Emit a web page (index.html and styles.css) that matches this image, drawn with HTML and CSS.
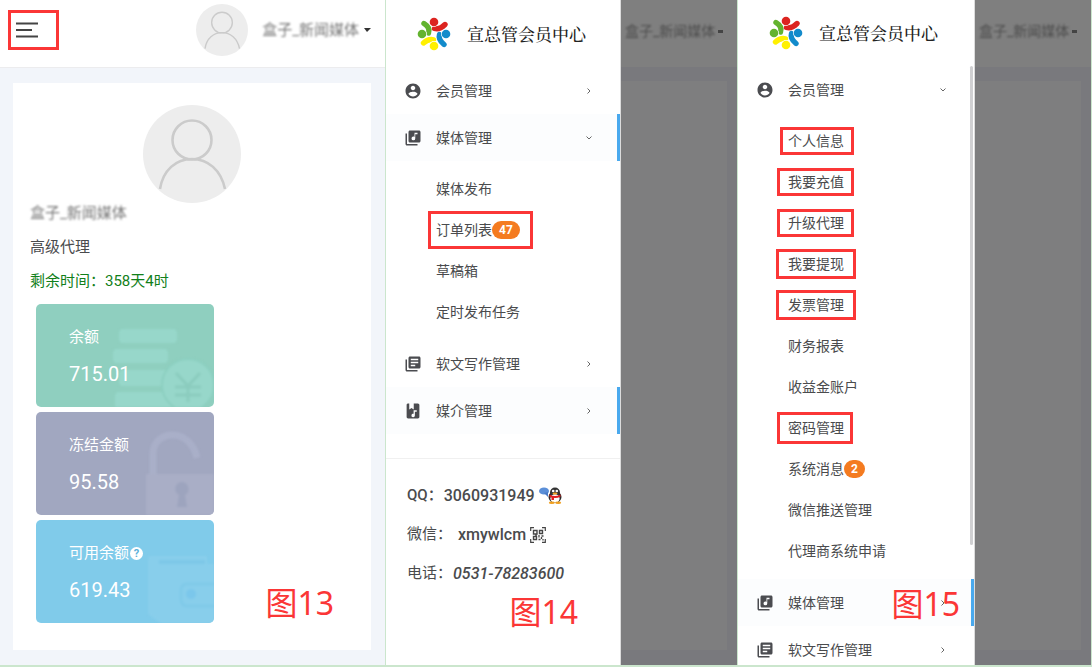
FILE: index.html
```html
<!DOCTYPE html>
<html lang="zh-CN">
<head>
<meta charset="utf-8">
<title>宣总管会员中心</title>
<link rel="stylesheet" href="styles.css">
</head>
<body>
<svg class="defs" aria-hidden="true">
  <symbol id="avatar" viewBox="0 0 98 98">
    <circle cx="49" cy="49" r="49" fill="#ededed"/>
    <g fill="none" stroke="#cbcbcb" stroke-width="2.6"><circle cx="49" cy="35" r="19.5"/><path d="M17 84C20 65 33 54 49 54S78 65 82 84"/></g>
  </symbol>
  <symbol id="logo" viewBox="0 0 34 34">
    <g fill="none" stroke-width="5.4" stroke-linecap="round">
      <path d="M17.500 11.500Q22.500 13 28 7.500" stroke="#dc2420"/>
      <path d="M22.500 17.500Q21 22.500 27 27.500" stroke="#138bcb"/>
      <path d="M16.500 22.800Q11.500 21.500 6.500 26" stroke="#fff000"/>
      <path d="M11.500 16Q13.500 10.500 7 6.500" stroke="#63b32f"/>
    </g>
    <circle cx="17" cy="5" r="5" fill="#fff"/><circle cx="29" cy="17" r="5" fill="#fff"/><circle cx="17" cy="29" r="5" fill="#fff"/><circle cx="5" cy="17" r="5" fill="#fff"/>
    <circle cx="17" cy="5" r="4.300" fill="#dc2420"/><circle cx="29" cy="17" r="4.300" fill="#138bcb"/><circle cx="17" cy="29" r="4.300" fill="#fff000"/><circle cx="5" cy="17" r="4.300" fill="#63b32f"/>
  </symbol>
  <symbol id="account" viewBox="0 0 24 24"><path d="M12 2C6.480 2 2 6.480 2 12s4.480 10 10 10 10-4.480 10-10S17.520 2 12 2zm0 3c1.660 0 3 1.340 3 3s-1.340 3-3 3-3-1.340-3-3 1.340-3 3-3zm0 14.200c-2.500 0-4.710-1.280-6-3.220.030-1.990 4-3.080 6-3.080 1.990 0 5.970 1.090 6 3.080-1.290 1.940-3.500 3.220-6 3.220z"/></symbol>
  <symbol id="music" viewBox="0 0 24 24"><path d="M20 2H8c-1.100 0-2 .9-2 2v12c0 1.100.9 2 2 2h12c1.100 0 2-.9 2-2V4c0-1.100-.9-2-2-2zm-2 5h-3v5.500a2.500 2.500 0 1 1-2.500-2.500c.57 0 1.080.19 1.500.51V5h4v2zM4 6H2v14c0 1.100.9 2 2 2h14v-2H4V6z"/></symbol>
  <symbol id="books" viewBox="0 0 24 24"><path d="M4 6H2v14c0 1.100.9 2 2 2h14v-2H4V6zm16-4H8c-1.100 0-2 .9-2 2v12c0 1.100.9 2 2 2h12c1.100 0 2-.9 2-2V4c0-1.100-.9-2-2-2zm-1 9H9V9h10v2zm-4 4H9v-2h6v2zm4-8H9V5h10v2z"/></symbol>
  <symbol id="album" viewBox="0 0 24 24"><path d="M5 2C4 2 3.500 3 3.500 4v16c0 1 .8 2 2 2h13c1.200 0 2-1 2-2V4c0-1-.8-2-2-2H13v8l-3-2-3 2V2zm12 9v2h-2.500v5a2.300 2.300 0 1 1-1.700-2.200V11z"/></symbol>
  <symbol id="chevron" viewBox="0 0 8 8"><path d="M2.500 1.500 5 4 2.500 6.500" fill="none" stroke="#666" stroke-width="1"/></symbol>
</svg>
<main class="board">
  <section class="panel">
    <header class="topbar">
      <button class="menu-button" type="button" aria-label="菜单">
        <svg width="22" height="16" viewBox="0 0 22 16"><path d="M0 1.500h22M0 8h16M0 14.500h22" stroke="#444" stroke-width="1.800"/></svg>
      </button>
      <button class="user" type="button">
        <svg class="user-pic"><use href="#avatar"/></svg>
        <span class="masked">盒子_新闻媒体</span>
        <svg class="caret" width="7" height="6" viewBox="0 0 7 6"><path d="M0 1h7L3 5z" fill="#333"/></svg>
      </button>
    </header>
    <div class="content">
      <article class="card">
        <svg class="card-pic"><use href="#avatar"/></svg>
        <p class="line masked">盒子_新闻媒体</p>
        <p class="line">高级代理</p>
        <p class="line remain">剩余时间：358天4时</p>
        <div class="tiles">
          <div class="tile green">
            <svg class="art" viewBox="0 0 105 103"><g fill="#97d7ca"><rect x="10" y="25" width="58" height="14" rx="4"/><rect x="4" y="45" width="55" height="14" rx="4"/><rect x="10" y="66" width="48" height="16" rx="4"/><rect x="6" y="88" width="58" height="18" rx="4"/><circle cx="79" cy="81" r="26" stroke="#8ccfc0" stroke-width="2"/></g><path d="M67 69l12 13 12-13M66 83h26M66 91h26M79 82v16" fill="none" stroke="#8bccbe" stroke-width="3"/></svg>
            <span class="label">余额</span><span class="value">715.01</span>
          </div>
          <div class="tile violet">
            <svg class="art" viewBox="0 0 105 103"><path d="M44 64V42c0-25 38-27 44 4" fill="none" stroke="#a9afc8" stroke-width="7"/><path d="M37 62h68v41H37z" fill="#a9aec6"/><path d="M72 70a7 7 0 0 1 4 13l2 12H68l2-12a7 7 0 0 1 2-13z" fill="#9da4be"/></svg>
            <span class="label">冻结金额</span><span class="value">95.58</span>
          </div>
          <div class="tile blue">
            <svg class="art" viewBox="0 0 105 103"><path d="M40 36h58v8h7v59H51l-12-9V39z" fill="#88ceeb"/><path d="M50 42h46" stroke="#7dc8e8" stroke-width="4"/><path d="M105 64H78q-6 0-6 7v7q0 8 6 8h27" fill="none" stroke="#80cae9" stroke-width="3"/><circle cx="82" cy="74" r="5" fill="#7bc7eb"/></svg>
            <span class="label">可用余额<span class="help">?</span></span><span class="value">619.43</span>
          </div>
        </div>
      </article>
    </div>
    <p class="caption c13">图13</p>
  </section>

  <section class="panel split second">
    <div class="drawer">
      <div class="brand"><svg><use href="#logo"/></svg><span>宣总管会员中心</span></div>
      <nav>
        <button class="row" type="button"><svg class="ic"><use href="#account"/></svg><span>会员管理</span><svg class="chev"><use href="#chevron"/></svg></button>
        <button class="row active" type="button"><svg class="ic"><use href="#music"/></svg><span>媒体管理</span><svg class="chev open"><use href="#chevron"/></svg></button>
        <ul class="sub">
          <li><a href="#">媒体发布</a></li>
          <li><a class="mark wide" href="#">订单列表<span class="badge">47</span></a></li>
          <li><a href="#">草稿箱</a></li>
          <li><a href="#">定时发布任务</a></li>
        </ul>
        <button class="row" type="button"><svg class="ic"><use href="#books"/></svg><span>软文写作管理</span><svg class="chev"><use href="#chevron"/></svg></button>
        <button class="row active" type="button"><svg class="ic"><use href="#album"/></svg><span>媒介管理</span><svg class="chev"><use href="#chevron"/></svg></button>
      </nav>
      <div class="contact">
        <p><b>QQ：</b><b class="num">3060931949</b>
          <svg class="qq" width="24" height="17" viewBox="0 0 24 17"><ellipse cx="5" cy="4" rx="5" ry="3.600" fill="#5b8fd8"/><path d="M5 6l4 4 0-5z" fill="#4a7cc8"/><ellipse cx="16" cy="10" rx="6.500" ry="6" fill="#2a2a2a"/><ellipse cx="16" cy="5.500" rx="5" ry="5" fill="#333"/><ellipse cx="16" cy="11.500" rx="4.600" ry="4.300" fill="#fff"/><path d="M10.500 7.500q5.500 3 11 0v2.300q-5.500 2.500-11 0z" fill="#e02020"/><path d="M12.500 9.500h2.500v3.500h-2.500z" fill="#e02020"/><circle cx="14.200" cy="4" r="1.300" fill="#fff"/><circle cx="17.800" cy="4" r="1.300" fill="#fff"/><ellipse cx="16" cy="6.500" rx="2.500" ry="1" fill="#f5a623"/><ellipse cx="12.800" cy="15.800" rx="3" ry="1.200" fill="#f0a020"/><ellipse cx="19.200" cy="15.800" rx="3" ry="1.200" fill="#f0a020"/></svg></p>
        <p>微信： <b class="num wx">xmywlcm</b>
          <svg class="qr" width="16" height="16" viewBox="0 0 16 16" fill="none" stroke="#444"><path d="M.7 4V.7H4M12 .7h3.300V4M15.300 12v3.300H12M4 15.300H.7V12" stroke-width="1.200"/><path d="M3.500 3.500h3.500v3.500h-3.500zM9.500 3.500h3v3h-3zM3.500 9.500h3v3h-3z" stroke-width="1.400"/><path d="M9 8v2.500M8.500 12.500h2M11.500 9h2M11.500 10v2M13 12v1.500M5 8h2" stroke-width="1.300"/></svg></p>
        <p>电话：<b class="num"><i>0531-78283600</i></b></p>
      </div>
      <p class="caption c14">图14</p>
    </div>
    <div class="shade"><div class="shade-top"><span class="masked">盒子_新闻媒体</span><span class="dot"></span></div><div class="shade-body"><div></div></div></div>
  </section>

  <section class="panel split third">
    <div class="drawer">
      <div class="brand"><svg><use href="#logo"/></svg><span>宣总管会员中心</span></div>
      <nav>
        <button class="row" type="button"><svg class="ic"><use href="#account"/></svg><span>会员管理</span><svg class="chev open"><use href="#chevron"/></svg></button>
        <ul class="sub">
          <li><a class="mark near" href="#">个人信息</a></li>
          <li><a class="mark" href="#">我要充值</a></li>
          <li><a class="mark" href="#">升级代理</a></li>
          <li><a class="mark large" href="#">我要提现</a></li>
          <li><a class="mark large" href="#">发票管理</a></li>
          <li><a href="#">财务报表</a></li>
          <li><a href="#">收益金账户</a></li>
          <li><a class="mark tall" href="#">密码管理</a></li>
          <li><a href="#">系统消息<span class="badge">2</span></a></li>
          <li><a href="#">微信推送管理</a></li>
          <li><a href="#">代理商系统申请</a></li>
        </ul>
        <button class="row active" type="button"><svg class="ic"><use href="#music"/></svg><span>媒体管理</span><svg class="chev"><use href="#chevron"/></svg></button>
        <button class="row" type="button"><svg class="ic"><use href="#books"/></svg><span>软文写作管理</span><svg class="chev"><use href="#chevron"/></svg></button>
      </nav>
      <span class="thumb"></span>
      <p class="caption c15">图15</p>
    </div>
    <div class="shade"><div class="shade-top"><span class="masked">盒子_新闻媒体</span><span class="dot"></span></div><div class="shade-body"><div></div></div></div>
  </section>
</main>
</body>
</html>
```

FILE: styles.css
```css
* { box-sizing: border-box; }
body { margin: 0; font: 14px/20px Roboto, "Noto Sans CJK SC", sans-serif; color: #4a4b4d; background: #fff; }
p, ul { margin: 0; padding: 0; }
ul { list-style: none; }
button { font: inherit; color: inherit; background: none; border: 0; padding: 0; text-align: left; }
a { color: inherit; text-decoration: none; }
.defs { position: absolute; width: 0; height: 0; }

.board { display: grid; grid-template-columns: 386fr 352fr 354fr; height: 100vh; border-bottom: 2px solid #cbe6cd; }
.panel { position: relative; min-width: 0; overflow: hidden; border-right: 1px solid #cbe6cd; display: flex; flex-direction: column; }
.masked { color: #777; font-size: 15px; filter: blur(1px); white-space: nowrap; }

/* Account page */
.topbar { display: flex; justify-content: space-between; align-items: center; height: 68px; padding: 0 14px 7px 8px; border-bottom: 1px solid #ececee; flex: none; }
.menu-button { border: 3px solid #fb3636; width: 51px; height: 40px; padding-left: 5px; display: flex; align-items: center; }
.user { display: flex; align-items: center; }
.user-pic { width: 52px; height: 52px; margin-right: 14px; }
.caret { margin-left: 5px; }
.content { flex: 1; background: #f2f5fa; padding: 15px 14px 15px 13px; }
.card { background: #fff; height: 100%; padding: 22px 17px 27px; display: flex; flex-direction: column; }
.card-pic { width: 98px; height: 98px; align-self: center; flex: none; }
.line { font-size: 15px; margin-bottom: 14px; }
.remain { color: #12801a; margin-bottom: 13px; }
.tiles { display: flex; flex-direction: column; gap: 5px; margin-left: 6px; width: 55%; }
.tile { position: relative; overflow: hidden; display: flex; flex-direction: column; gap: 15px; padding: 23px 33px 21px; border-radius: 5px; color: #fff; white-space: nowrap; }
.green { background: #8fcfbf; }
.violet { background: #a1a7c0; }
.blue { background: #80cbea; }
.art { position: absolute; right: 0; bottom: 0; width: 105px; height: 103px; filter: blur(1px); }
.label { position: relative; font-size: 15px; display: flex; align-items: center; gap: 1px; }
.value { position: relative; font-size: 20px; line-height: 24px; }
.help { width: 13px; height: 13px; border-radius: 50%; background: #fff; color: #5ab0da; font: bold 11px/13px Roboto, sans-serif; text-align: center; }

/* Drawers */
.split { display: grid; }
.second { grid-template-columns: 235fr 116fr; }
.third { grid-template-columns: 237fr 116fr; }
.drawer { position: relative; min-width: 0; overflow: hidden; border-right: 1px solid #dcdcdc; background: #fff; }
.brand { display: flex; align-items: center; gap: 16px; height: 67px; padding-left: 31px; color: #222; font-size: 17px; font-weight: 500; white-space: nowrap; }
.brand span { font-family: "Noto Serif CJK SC", "Noto Sans CJK SC", sans-serif; }
.third .brand { height: 66px; }
.brand svg { width: 34px; height: 34px; }
.row { position: relative; display: flex; align-items: center; width: 100%; height: 47px; padding: 0 27px 0 18px; }
.third .row { padding-left: 18px; }
.row span { flex: 1; margin-left: 14px; }
.ic { width: 18px; height: 18px; fill: #4b4c50; }
.chev { width: 8px; height: 8px; }
.open { transform: rotate(90deg); }
.active { background: #fcfdfe; border-right: 3px solid #49a9ee; padding-right: 24px; }
.sub { padding: 7px 0 8px 50px; }
.sub li { height: 41px; display: flex; align-items: center; }
.sub a { position: relative; display: flex; align-items: center; }
.badge { background: #f47b20; color: #fff; font-size: 12px; font-weight: bold; line-height: 18px; border-radius: 9px; padding: 0 7px; }
.mark::after { content: ""; position: absolute; inset: -4px -10px -4px -11px; border: 3px solid #fb3636; }
.mark.near::after { left: -8px; }
.mark.large::after { inset: -5px -12px -5px -12px; }
.mark.tall::after { inset: -6px -9px -6px -11px; }
.mark.wide::after { inset: -9px -13px -9px -8px; }
.contact { margin-top: 24px; padding: 17px 0 0 21px; border-top: 1px solid #f0f0f0; font-size: 15px; line-height: 39px; white-space: nowrap; }
.contact p { display: flex; align-items: center; }
.contact b { font-weight: 500; }
.contact .num { font-size: 16px; margin-left: 1px; }
.contact .wx { margin-left: 6px; }
.qq, .qr { margin-left: 4px; }
.thumb { position: absolute; right: 1px; top: 66px; width: 3px; height: 72%; background: #d0d0d2; border-radius: 2px; }

/* Dimmed page behind a drawer */
.shade { background: #7f7f7f; overflow: hidden; display: flex; flex-direction: column; min-width: 0; }
.shade-top { height: 67px; flex: none; display: flex; align-items: center; gap: 3px; padding: 0 0 5px 4px; }
.shade .masked { color: #4c4c4c; font-size: 14px; }
.dot { width: 5px; height: 3px; background: #444; flex: none; }
.shade-body { flex: 1; background: #79797d; padding: 14px 10px 15px 0; }
.shade-body div { height: 100%; background: #7e7e7f; }

.caption { position: absolute; font: 32px/40px "Noto Sans", "Noto Sans CJK SC", sans-serif; color: #fb3636; white-space: nowrap; }
.c13 { right: 51px; bottom: 42px; }
.c14 { right: 42px; bottom: 33px; }
.c15 { right: 14px; bottom: 41px; }
```
